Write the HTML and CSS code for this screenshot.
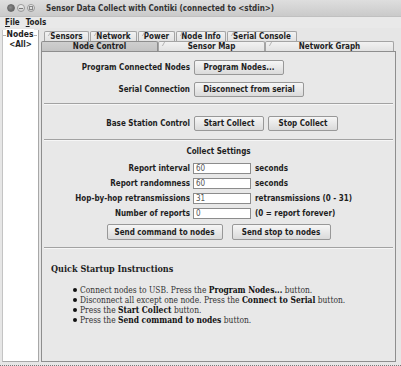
FILE: index.html
```html
<!DOCTYPE html>
<html lang="en">
<head>
  <meta charset="UTF-8" />
  <title>Sensor Data Collect with Contiki</title>
  <link rel="stylesheet" href="styles.css">
</head>
<body>
  <div class="window">
    <div class="titlebar">
      <span class="wbtn wbtn-close"></span>
      <span class="wbtn wbtn-min"></span>
      <span class="wbtn wbtn-max"></span>
      <span class="title">Sensor Data Collect with Contiki (connected to &lt;stdin&gt;)</span>
    </div>

    <div class="menubar">
      <span class="menu"><u>F</u>ile</span>
      <span class="menu"><u>T</u>ools</span>
    </div>

    <div class="main">
      <div class="nodes">
        <div class="nodes-title"><span>Nodes</span></div>
        <div class="node-item">&lt;All&gt;</div>
      </div>

      <div class="tabpane">
        <div class="tabrow tabrow-back">
          <div class="tab tab-sensors">Sensors</div>
          <div class="tab tab-network">Network</div>
          <div class="tab tab-power">Power</div>
          <div class="tab tab-info">Node Info</div>
          <div class="tab tab-console">Serial Console</div>
        </div>
        <div class="tabrow tabrow-front">
          <div class="tab tab-control selected">Node Control</div>
          <div class="tab tab-map">Sensor Map</div>
          <div class="tab tab-graph">Network Graph</div>
        </div>

        <div class="panel">
          <div class="section">
            <div class="row">
              <span class="label">Program Connected Nodes</span>
              <button class="btn btn-program">Program Nodes...</button>
            </div>
            <div class="row">
              <span class="label">Serial Connection</span>
              <button class="btn btn-serial">Disconnect from serial</button>
            </div>
          </div>

          <hr class="sep">

          <div class="section section-base">
            <div class="row">
              <span class="label">Base Station Control</span>
              <button class="btn btn-collect">Start Collect</button>
              <button class="btn btn-collect">Stop Collect</button>
            </div>
          </div>

          <hr class="sep">

          <div class="settings">
            <div class="settings-title">Collect Settings</div>
            <div class="field">
              <span class="label">Report interval</span>
              <span class="input">60</span>
              <span class="unit">seconds</span>
            </div>
            <div class="field">
              <span class="label">Report randomness</span>
              <span class="input">60</span>
              <span class="unit">seconds</span>
            </div>
            <div class="field">
              <span class="label">Hop-by-hop retransmissions</span>
              <span class="input">31</span>
              <span class="unit">retransmissions (0 - 31)</span>
            </div>
            <div class="field">
              <span class="label">Number of reports</span>
              <span class="input">0</span>
              <span class="unit">(0 = report forever)</span>
            </div>
            <div class="actions">
              <button class="btn btn-send">Send command to nodes</button>
              <button class="btn btn-stop">Send stop to nodes</button>
            </div>
          </div>

          <hr class="sep">

          <div class="help">
            <h3>Quick Startup Instructions</h3>
            <ul>
              <li>Connect nodes to USB. Press the <b>Program Nodes...</b> button.</li>
              <li>Disconnect all except one node. Press the <b>Connect to Serial</b> button.</li>
              <li>Press the <b>Start Collect</b> button.</li>
              <li>Press the <b>Send command to nodes</b> button.</li>
            </ul>
          </div>
        </div>
      </div>
    </div>
    <div class="statusbar"></div>
  </div>
</body>
</html>
```

FILE: styles.css
```css
:root {
  --window-bg: #e6e6e6;
  --panel-bg: #e8e8e8;
  --text: #1e1e1e;
  --ui-font: 'DejaVu Sans', 'Liberation Sans', sans-serif;
  --serif-font: 'DejaVu Serif', 'Liberation Serif', serif;
}

* {
  box-sizing: border-box;
  margin: 0;
  padding: 0;
}

body {
  background: #ffffff;
  font-family: var(--ui-font);
  font-stretch: condensed;
  font-size: 8px;
  font-weight: bold;
  color: var(--text);
}

.window {
  width: 401px;
  height: 366px;
  background: var(--window-bg);
  display: flex;
  flex-direction: column;
  overflow: hidden;
}

/* Title bar */
.titlebar {
  height: 17px;
  display: flex;
  align-items: center;
  padding-left: 7px;
  background: linear-gradient(#dedede, #cacaca);
  border-bottom: 1px solid #c0c0c0;
}

.wbtn {
  width: 8px;
  height: 8px;
  border-radius: 50%;
  margin-right: 2px;
  border: 1px solid #9a9a9a;
  background: linear-gradient(#f0f0f0, #cfcfcf);
  position: relative;
}

.wbtn-close {
  background: radial-gradient(circle at 40% 40%, #8a8a8a, #5a5a5a);
  border-color: #6a6a6a;
}

.wbtn-min::after {
  content: '';
  position: absolute;
  left: 1px;
  right: 1px;
  top: 3px;
  height: 1px;
  background: #777;
}

.wbtn-max::after {
  content: '';
  position: absolute;
  left: 1px;
  top: 1px;
  width: 4px;
  height: 4px;
  border: 1px solid #888;
  box-sizing: border-box;
}

.title {
  margin-left: 9px;
  font-size: 8px;
  color: #333;
}

/* Menu */
.menubar {
  height: 11px;
  display: flex;
  align-items: center;
  padding-left: 5px;
  gap: 6px;
  background: #e9e9e9;
}

/* Main area */
.main {
  flex: 1;
  display: flex;
  padding: 2px 5px 0 2px;
}

.nodes {
  width: 37px;
  background: #ffffff;
  border-left: 1px solid #c4c4c4;
  border-right: 1px solid #a8a8a8;
  border-bottom: 1px solid #a8a8a8;
  margin-bottom: 2px;
}

.nodes-title {
  height: 8px;
  border-bottom: 1px solid #b0b0b0;
  margin: 0 1px 0 0;
  position: relative;
  top: -2px;
  text-align: center;
  font-size: 8.5px;
}

.nodes-title span {
  background: #ffffff;
  padding: 0 1px;
  position: relative;
  top: 1px;
}

.node-item {
  text-align: center;
  margin-top: 2px;
}

.tabpane {
  flex: 1;
  display: flex;
  flex-direction: column;
  margin-left: 2px;
}

.tabrow {
  display: flex;
  height: 11px;
}

.tabrow-back {
  padding-left: 3px;
  height: 10px;
  margin-top: 1px;
}

.tab {
  display: flex;
  align-items: center;
  justify-content: center;
  border: 1px solid #a4a4a4;
  border-bottom: none;
  border-radius: 2px 2px 0 0;
  background: linear-gradient(#f2f2f2, #e2e2e2);
  margin-right: 1px;
  position: relative;
}

/* small slanted corner on each tab */
.tab::before {
  content: '';
  position: absolute;
  left: 1px;
  top: 0;
  width: 3px;
  height: 4px;
  border-right: 1px solid #b4b4b4;
  transform: skewX(-30deg);
}

.tab-sensors { width: 45px; }
.tab-network { width: 47px; }
.tab-power { width: 37px; }
.tab-info { width: 50px; }
.tab-console { width: 70px; }

.tabrow-front {
  border-bottom: 1px solid #8e8e8e;
}

.tabrow-front .tab {
  margin-right: 0;
}

.tab-control { width: 117px; }
.tab-map { width: 107px; }
.tab-graph { width: 129px; }

.tab.selected {
  background: linear-gradient(#cfcfcf, #c3c3c3);
  border-color: #8e8e8e;
}

.tab.selected::before {
  display: none;
}

/* Panel */
.panel {
  flex: 1;
  background: var(--panel-bg);
  border: 1px solid #8e8e8e;
  border-top: none;
  margin-bottom: 2px;
  padding: 0 2px;
}

.section {
  padding: 8px 0 6px;
  display: flex;
  flex-direction: column;
  gap: 7px;
}

.section-base {
  padding: 11px 0 8px;
}

.row {
  display: flex;
  align-items: center;
  gap: 4px;
}

.label {
  width: 146px;
  text-align: right;
  flex-shrink: 0;
}

.btn {
  font-family: var(--ui-font);
  font-stretch: condensed;
  font-size: 8px;
  font-weight: bold;
  color: var(--text);
  height: 15px;
  padding: 0 5px;
  border: 1px solid #989898;
  border-radius: 2px;
  background: linear-gradient(#f6f6f6, #dadada);
}

.btn-program { width: 90px; }
.btn-serial { width: 110px; }
.btn-collect { width: 70px; }

.sep {
  border: none;
  border-top: 1px solid #a2a2a2;
  border-bottom: 1px solid #f6f6f6;
}

/* Settings */
.settings {
  padding: 6px 0 7px;
  display: flex;
  flex-direction: column;
}

.settings-title {
  text-align: center;
  margin-bottom: 5px;
}

.field {
  display: flex;
  align-items: center;
  height: 15px;
  gap: 3px;
}

.field .input {
  width: 58px;
  height: 11px;
  line-height: 9px;
  border: 1px solid #8c8c8c;
  background: #ffffff;
  font-weight: normal;
  color: #555;
  padding: 0 2px;
}

.unit {
  margin-left: 1px;
}

.actions {
  display: flex;
  justify-content: center;
  gap: 9px;
  margin-top: 3px;
}

.btn-send { width: 116px; height: 16px; }
.btn-stop { width: 99px; height: 16px; }

/* Help */
.help {
  font-family: var(--serif-font);
  font-weight: normal;
  padding: 15px 0 0 7px;
}

.help h3 {
  font-size: 9px;
  font-weight: bold;
  margin-bottom: 11px;
}

.help ul {
  list-style: none;
  padding-left: 22px;
  font-size: 8.4px;
  color: #333;
}

.help li {
  line-height: 10px;
  display: flex;
  align-items: center;
  white-space: pre;
}

.help li::before {
  content: '';
  width: 4px;
  height: 4px;
  border-radius: 50%;
  background: #111;
  margin-right: 3px;
  flex-shrink: 0;
}

.help b {
  color: #111;
}

.statusbar {
  height: 2px;
  border-bottom: 1px dotted #777;
}
```
